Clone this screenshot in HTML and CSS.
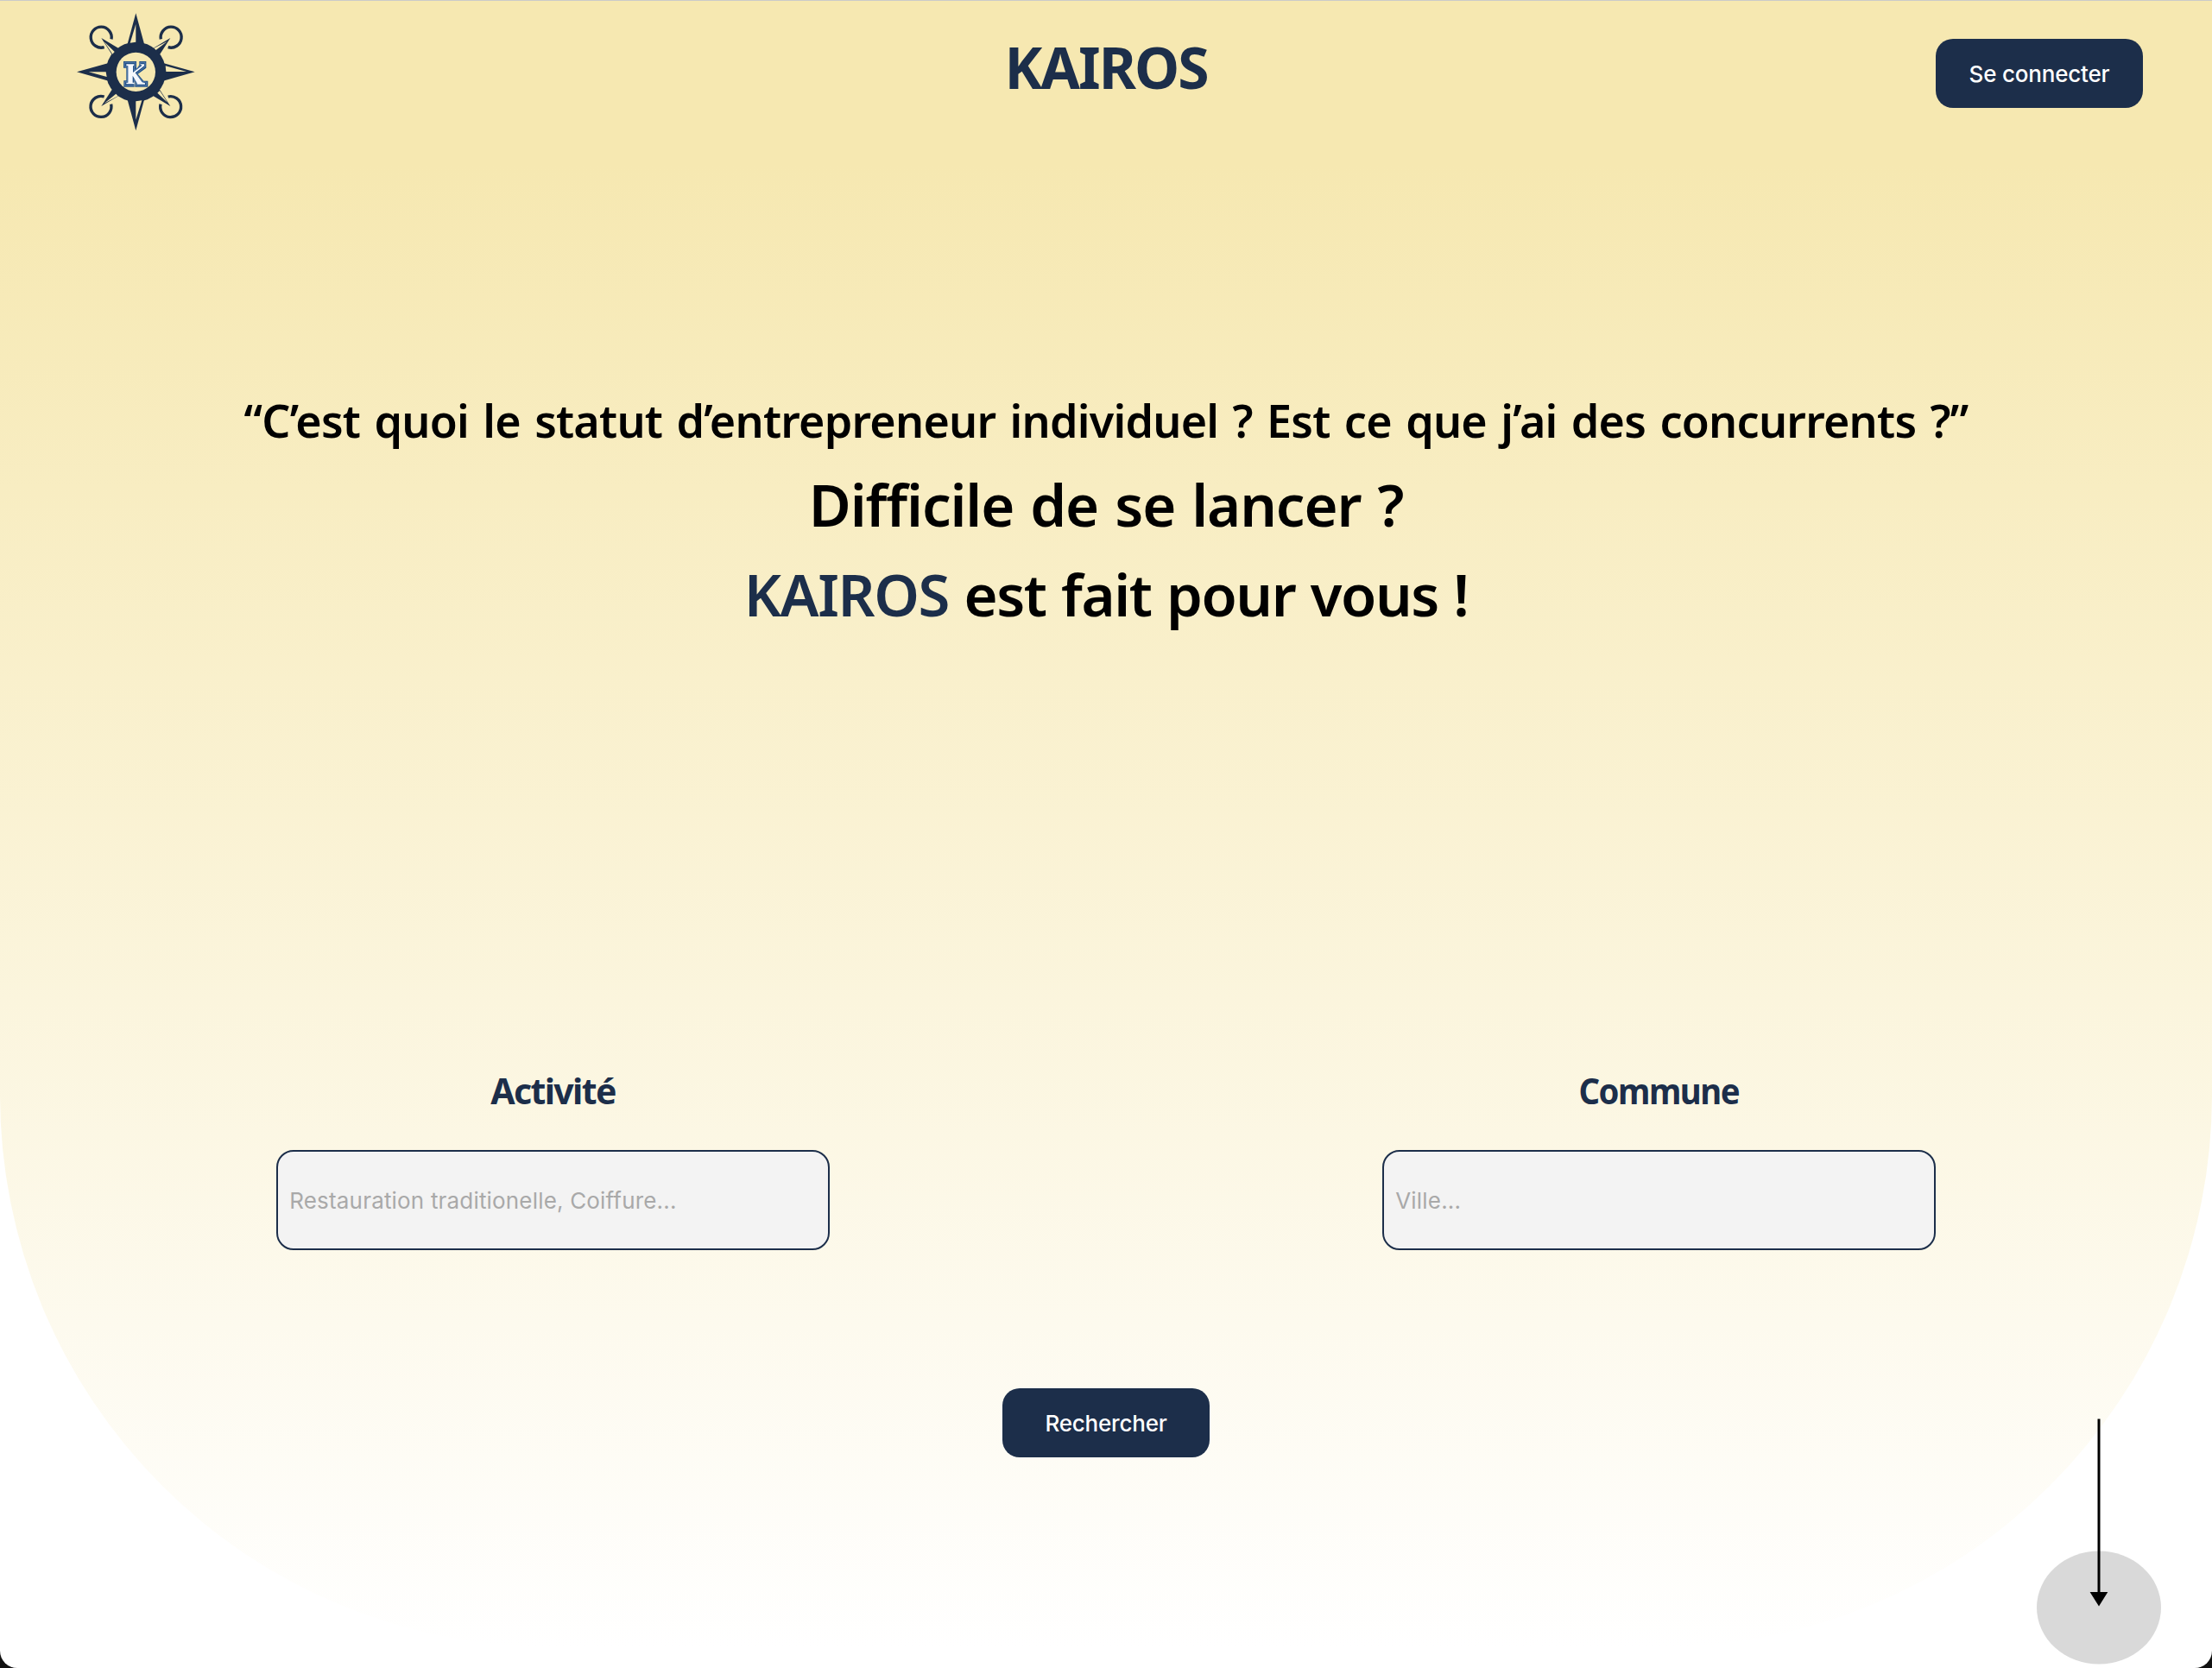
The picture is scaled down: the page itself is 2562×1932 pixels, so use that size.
FILE: index.html
```html
<!DOCTYPE html>
<html lang="fr">
<head>
<meta charset="utf-8">
<title>KAIROS</title>
<link rel="stylesheet" href="styles.css">
</head>
<body>
<div class="page">
  <main class="hero">
    <header class="header">
      <svg class="logo" viewBox="0 0 540 510" role="img" aria-label="Logo">
        <g fill="none" stroke="#1c2e4a" stroke-width="10">
          <path d="M152 164A36 36 0 1 1 177 136"/>
          <path d="M374 164A36 36 0 1 0 349 136"/>
          <path d="M152 336A36 36 0 1 0 176 362"/>
          <path d="M374 336A36 36 0 1 1 348 362"/>
        </g>
        <g fill="#1c2e4a">
          <path d="M262 46L293 160H231Z"/>
          <path d="M262 454L231 340H293Z"/>
          <path d="M57 250L170 218V282Z"/>
          <path d="M467 250L354 218V282Z"/>
          <path d="M142 132L206 170L182 194Z"/>
          <path d="M382 132L318 170L342 194Z"/>
          <path d="M142 369L206 331L182 307Z"/>
          <path d="M382 369L318 331L342 307Z"/>
          <circle cx="262" cy="250" r="104"/>
        </g>
        <g fill="#f6e8b1">
          <path d="M262 84V146L242 149Z"/>
          <path d="M262 416V352L283 349Z"/>
          <path d="M98 250L158 250L161 267Z"/>
          <path d="M438 249H367L365 229Z"/>
          <path d="M152 145L188 180L181 188Z"/>
          <path d="M371 144L332 174L325 167Z"/>
          <path d="M152 359L200 334L193 326Z"/>
          <path d="M372 356L345 315L337 323Z"/>
          <circle cx="262" cy="250" r="68"/>
        </g>
        <path fill="#1f4e86" d="M219 213H264V237H266L274 226V213H298V236L269 257L289 281H304V302H259V286L257 281V302H220V280H229V236H219Z"/>
        <path fill="none" stroke="#8ba9cb" stroke-width="1.5" d="M223 217H260V233H256V246L278 226V217H294V232L264 256L287 285H299V298H263V286L256 275V298H224V284H232V232H223Z"/>
        <path fill="#f5f8fd" d="M229 223H256V229H252V252L283 228L278 223H291V229L260 253L284 286L294 289V293H266V289L251 263V287H257V292H229V287H235V229H229Z"/>
      </svg>
      <h1 class="brand">KAIROS</h1>
      <button class="button" type="button">Se connecter</button>
    </header>
    <section class="pitch">
      <p class="quote">“C’est quoi le statut d’entrepreneur individuel ? Est ce que j’ai des concurrents ?”</p>
      <p class="claim">Difficile de se lancer ?</p>
      <p class="claim claim-answer"><span class="name">KAIROS</span> est fait pour vous !</p>
    </section>
    <form class="search">
      <div class="fields">
        <div class="field">
          <label class="label" for="activity">Activité</label>
          <input class="input" id="activity" type="text" placeholder="Restauration traditionelle, Coiffure...">
        </div>
        <div class="field">
          <label class="label label-city" for="city">Commune</label>
          <input class="input" id="city" type="text" placeholder="Ville...">
        </div>
      </div>
      <button class="button" type="button">Rechercher</button>
    </form>
  </main>
  <svg class="scroll" viewBox="0 0 146 286" aria-hidden="true">
    <ellipse cx="73" cy="219" rx="72" ry="65.5" fill="#d9d9d9"/>
    <path d="M71.5 0.5h3V201h8.800L73 217.500L62.600 201h8.900Z"/>
  </svg>
</div>
</body>
</html>
```
FILE: styles.css
```css
* {
  box-sizing: border-box;
}

body {
  margin: 0;
  background: #111;
  font-family: Inter, "Liberation Sans", sans-serif;
}

.page {
  position: relative;
  height: 1932px;
  overflow: hidden;
  border-top: 1px solid #cbcbc9;
  border-radius: 0 0 20px 20px;
  background: #fff;
}

.hero {
  display: flex;
  flex-direction: column;
  height: 1907px;
  border-radius: 0 0 640px 640px;
  background: linear-gradient(#f6e8b1 0%, #f6e8b1 10%, #fff 100%);
}

.header {
  display: grid;
  grid-template-columns: 1fr auto 1fr;
  align-items: start;
  height: 170px;
  padding: 0 80px 0 70px;
}

.logo {
  display: block;
  width: 180px;
  height: 170px;
  margin-top: -1px;
}

.brand {
  margin: 31px 0 0 10px;
  color: #1c2e4a;
  font: 700 66px/90px "Noto Sans", sans-serif;
  letter-spacing: -2px;
}

.button {
  width: 240px;
  height: 80px;
  padding: 1px 0 0;
  border: 0;
  border-radius: 20px;
  background: #1c2e4a;
  color: #fff;
  font: 500 26px/32px Inter, sans-serif;
  letter-spacing: -0.2px;
}

.header .button {
  justify-self: end;
  margin-top: 44px;
}

.pitch {
  display: flex;
  flex-direction: column;
  align-items: center;
  margin-top: 265px;
  font-family: "Noto Sans", sans-serif;
  font-weight: 600;
  white-space: nowrap;
}

.quote {
  margin: 0 0 -6px;
  font-size: 52px;
  line-height: 102px;
  letter-spacing: -0.75px;
  word-spacing: 3.5px;
}

.claim {
  margin: 0;
  font-size: 67px;
  line-height: 104px;
  letter-spacing: -1.1px;
  word-spacing: 2.7px;
}

.claim-answer {
  letter-spacing: -1.4px;
  word-spacing: 1.3px;
}

.name {
  color: #1c2e4a;
}

.search {
  display: flex;
  flex-direction: column;
  align-items: center;
  margin-top: 493px;
}

.fields {
  display: grid;
  grid-template-columns: 1fr 1fr;
  width: 100%;
  margin-bottom: 160px;
}

.field {
  display: flex;
  flex-direction: column;
  align-items: center;
  gap: 39px;
}

.label {
  color: #1c2e4a;
  font: 700 41px/60px "Noto Sans", sans-serif;
  letter-spacing: -1.6px;
}

.label-city {
  transform: scaleX(0.935);
}

.input {
  width: 50%;
  height: 116px;
  padding: 1px 13px 0;
  border: 2px solid #1c2e4a;
  border-radius: 20px;
  background: #f3f3f3;
  font: 400 26px/32px Inter, sans-serif;
  letter-spacing: 0.18px;
}

.input::placeholder {
  color: #a9a9a9;
}

.scroll {
  position: absolute;
  right: 58px;
  bottom: 3px;
  width: 146px;
  height: 286px;
}
```
